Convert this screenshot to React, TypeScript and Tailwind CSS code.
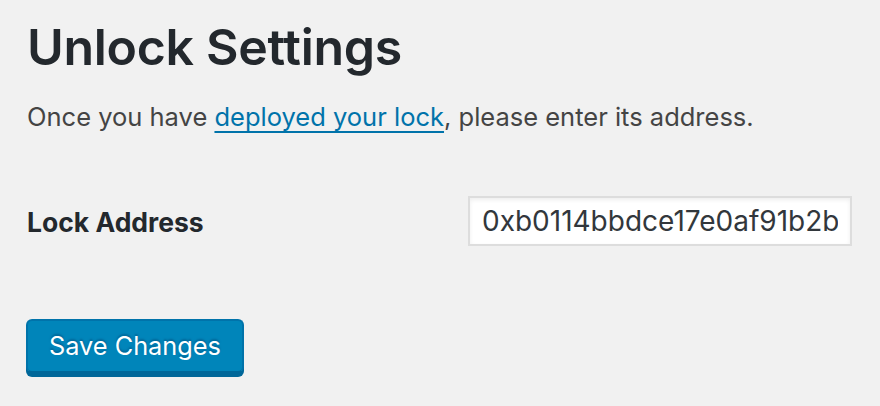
export default function App() {
  return (
    <div
      className="min-h-[406px] w-full bg-[#f1f1f1] pl-[27px] pt-[16px] text-[#23282d]"
      style={{ fontFamily: "Inter, 'Noto Sans', sans-serif" }}
    >
      <h1 className="text-[50px] font-semibold leading-[62px] tracking-[-0.3px]">Unlock Settings</h1>
      <p className="mt-[21px] text-[25.5px] leading-[36px] text-[#444]">
        Once you have{" "}
        <a href="#" className="text-[#0073aa] underline decoration-[2px] underline-offset-[5px]">
          deployed your lock
        </a>
        , please enter its address.
      </p>
      <div className="mt-[61px] flex items-center">
        <label className="w-[441px] pt-[4px] text-[26.5px] font-bold">Lock Address</label>
        <input
          type="text"
          readOnly
          value="0xb0114bbdce17e0af91b2bc3a9bf2d4e1f0c8a7d6"
          className="h-[50px] w-[384px] border-2 border-[#dddddd] bg-white px-[12px] text-[28px] text-[#32373c] shadow-[inset_0_2px_4px_rgba(0,0,0,0.07)] outline-none"
        />
      </div>
      <button
        type="button"
        className="mt-[73px] ml-[-1px] h-[54px] rounded-[6px] border-2 border-[#0073aa] border-b-[#006799] bg-[#0085ba] px-[21px] text-[25.3px] text-white shadow-[0_4px_0_#006799]"
        style={{ textShadow: "0 -2px 2px #006799" }}
      >
        Save Changes
      </button>
    </div>
  );
}
